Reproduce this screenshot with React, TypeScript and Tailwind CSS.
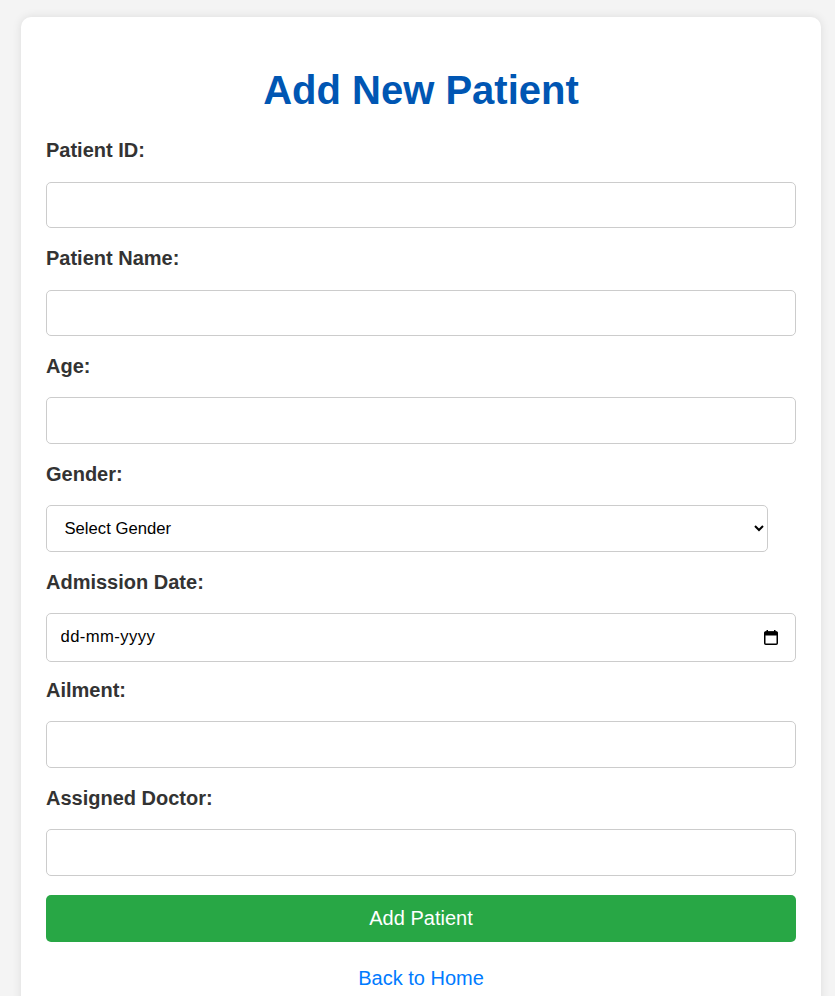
import React from "react";

const labelCls =
  "block text-[20px] leading-[23px] font-bold text-[#333] mb-[19.4px]";
const inputCls =
  "block w-full h-[46.4px] border border-[#ccc] rounded-[5px] bg-white px-[12.5px] text-[16.67px] text-black outline-none";

function CalendarIcon() {
  return (
    <svg
      width="14"
      height="15"
      viewBox="0 0 14 15"
      className="absolute right-[18px] top-[16.5px] pointer-events-none"
      aria-hidden="true"
    >
      <rect x="2.5" y="0" width="1.5" height="2.5" fill="#000" />
      <rect x="10" y="0" width="1.5" height="2.5" fill="#000" />
      <rect x="0.5" y="1.5" width="13" height="4" rx="1" fill="#000" />
      <rect
        x="0.75"
        y="2"
        width="12.5"
        height="12.25"
        rx="1"
        fill="none"
        stroke="#000"
        strokeWidth="1.5"
      />
    </svg>
  );
}

export default function App() {
  return (
    <div className="min-h-screen bg-[#f4f4f4] pt-[17px] font-['Liberation_Sans',Arial,sans-serif]">
      <div className="ml-[21px] w-[800px] bg-white rounded-[10px] shadow-[0_0_10px_rgba(0,0,0,0.1)] px-[25px] pt-[50px] pb-[25px]">
        <h1 className="text-[40px] leading-[46px] font-bold text-center text-[#0056b3] mb-[26.4px]">
          Add New Patient
        </h1>
        <form onSubmit={(e) => e.preventDefault()}>
          <div className="mb-[19px]">
            <label className={labelCls}>Patient ID:</label>
            <input type="text" className={inputCls} />
          </div>
          <div className="mb-[19px]">
            <label className={labelCls}>Patient Name:</label>
            <input type="text" className={inputCls} />
          </div>
          <div className="mb-[19px]">
            <label className={labelCls}>Age:</label>
            <input type="number" className={inputCls} />
          </div>
          <div className="mb-[19px]">
            <label className={labelCls}>Gender:</label>
            <select
              defaultValue=""
              className="block w-[722px] h-[46.7px] border border-[#ccc] rounded-[5px] bg-white pl-[13.5px] pr-[12.5px] text-[16.67px] text-black outline-none"
            >
              <option value="">Select Gender</option>
              <option value="Male">Male</option>
              <option value="Female">Female</option>
              <option value="Other">Other</option>
            </select>
          </div>
          <div className="mb-[17.5px]">
            <label className={labelCls}>Admission Date:</label>
            <div className="relative">
              <input
                type="text"
                placeholder="dd-mm-yyyy"
                className="block w-full h-[48.3px] border border-[#ccc] rounded-[5px] bg-white pl-[13.5px] pr-[44px] text-[16.67px] tracking-[0.4px] text-black placeholder:text-black outline-none"
              />
              <CalendarIcon />
            </div>
          </div>
          <div className="mb-[19px]">
            <label className={labelCls}>Ailment:</label>
            <input type="text" className={inputCls} />
          </div>
          <div>
            <label className={labelCls}>Assigned Doctor:</label>
            <input type="text" className={inputCls} />
          </div>
          <button
            type="submit"
            className="mt-[19px] block w-full h-[47.3px] bg-[#28a745] text-white text-[20px] rounded-[5px]"
          >
            Add Patient
          </button>
        </form>
        <div className="mt-[25.3px] text-center text-[20px] leading-[23px]">
          <a href="#" className="text-[#007bff]">
            Back to Home
          </a>
        </div>
      </div>
    </div>
  );
}
